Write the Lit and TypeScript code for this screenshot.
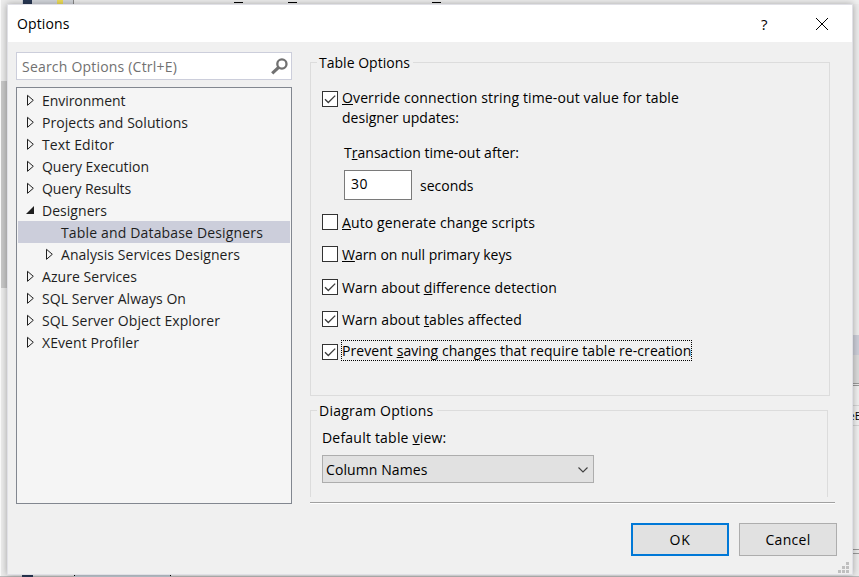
import { LitElement, html, css, svg, nothing } from "lit";
import { customElement, property, state } from "lit/decorators.js";

/** One line of text, tracked so that it fills a given measure. "&" marks the access key. */
@customElement("ui-text")
class UiText extends LitElement {
  @property() text = "";
  @property({ type: Number }) measure = 0;
  @state() private tracking = 0;

  static styles = css`
    :host { display: block; white-space: pre; }
    .run { display: inline-block; }
    .key { text-decoration: underline; text-decoration-thickness: 1px; text-underline-offset: 1px; text-decoration-skip-ink: none; }
  `;

  firstUpdated() {
    const run = this.renderRoot.querySelector(".run") as HTMLElement;
    const count = this.text.replace("&", "").length;
    if (this.measure && count > 1) {
      this.tracking = (this.measure - run.getBoundingClientRect().width) / count;
    }
  }

  render() {
    const at = this.text.indexOf("&");
    const body = at < 0
      ? this.text
      : html`${this.text.slice(0, at)}<span class="key">${this.text[at + 1]}</span>${this.text.slice(at + 2)}`;
    return html`<span class="run" style="letter-spacing:${this.tracking}px">${body}</span>`;
  }
}

@customElement("ui-check")
class UiCheck extends LitElement {
  @property({ type: Boolean }) checked = false;
  static styles = css`
    :host { display: block; flex: none; width: 16px; height: 16px; box-sizing: border-box; border: 1px solid #333; background: #fff; }
    svg { display: block; }
  `;
  render() {
    return this.checked
      ? html`<svg width="14" height="14" viewBox="0 0 14 14"><path d="M2 7.2 5.3 10.5 12.2 3.6" fill="none" stroke="#3c3c3c" stroke-width="1.3"/></svg>`
      : nothing;
  }
}

interface Node { label: string; w: number; kind: "closed" | "open" | "leaf"; child?: boolean; selected?: boolean; }

const NODES: Node[] = [
  { label: "Environment", w: 83.5, kind: "closed" },
  { label: "Projects and Solutions", w: 146, kind: "closed" },
  { label: "Text Editor", w: 72, kind: "closed" },
  { label: "Query Execution", w: 107, kind: "closed" },
  { label: "Query Results", w: 89, kind: "closed" },
  { label: "Designers", w: 65, kind: "open" },
  { label: "Table and Database Designers", w: 202, kind: "leaf", child: true, selected: true },
  { label: "Analysis Services Designers", w: 179, kind: "closed", child: true },
  { label: "Azure Services", w: 95, kind: "closed" },
  { label: "SQL Server Always On", w: 144, kind: "closed" },
  { label: "SQL Server Object Explorer", w: 178, kind: "closed" },
  { label: "XEvent Profiler", w: 97, kind: "closed" },
];

@customElement("app-root")
class AppRoot extends LitElement {
  static styles = css`
    :host { display: block; position: relative; width: 859px; height: 577px; overflow: hidden; background: #ececec; font: 14px/20px "Open Sans", "Noto Sans", sans-serif; color: #000; }
    * { box-sizing: border-box; }
    svg { display: block; flex: none; }
    .backdrop { display: block; }
    .dialog { position: absolute; left: 7px; top: 4px; width: 846px; height: 571px; border: 1px solid #e0e0e6; background: #f0f0f0; box-shadow: 0 0 7px rgba(0,0,0,.32); display: flex; flex-direction: column; }
    .title { height: 37px; flex: none; background: #fff; display: flex; align-items: center; padding: 0 23px 0 9px; }
    .title .grow { flex: 1; }
    .help { font-size: 15px; margin-right: 45px; width: 9px; }
    .body { display: flex; height: 463px; padding: 10px 17px 0 8px; gap: 18px; }
    .left { width: 276px; display: flex; flex-direction: column; gap: 7px; }
    .search { height: 28px; border: 1px solid #cccedb; background: #fff; display: flex; align-items: center; justify-content: space-between; padding: 1px 3px 0 5px; color: #717171; }
    .tree { height: 417px; border: 1px solid #828790; background: #f5f5f5; padding: 1px; color: #1e1e1e; }
    .node { height: 22px; display: flex; align-items: center; padding-left: 7px; gap: 6px; }
    .node ui-text { margin-top: 2px; }
    .child { padding-left: 26px; }
    .selected { background: #cccedb; }
    .right { width: 525px; display: flex; flex-direction: column; }
    .group { border: 1px solid #dcdcdc; }
    .legend { width: fit-content; background: #f0f0f0; padding: 0 3px 0 2px; margin: -10px 0 0 6px; }
    .table { width: 520px; height: 334px; margin-top: 10px; }
    .diagram { width: 518px; height: 87px; margin-top: 14px; border-bottom: 0; }
    .option { display: flex; align-items: flex-start; gap: 4px; padding-left: 11px; height: 20px; }
    .option ui-check { margin-top: 2px; }
    .first { height: 40px; margin-top: 15px; }
    .first ui-check { margin-top: 3px; }
    .timeout { padding: 15px 0 0 33px; }
    .line { display: flex; gap: 8px; margin-top: 7px; }
    .field { width: 68px; height: 30px; border: 1px solid #7a7a7a; background: #fff; padding: 3px 6px; }
    .unit { margin-top: 6px; }
    .options { display: flex; flex-direction: column; margin-top: 12px; }
    .options .option { height: 32px; }
    .options .option:nth-child(even) { height: 33px; }
    .options ui-text { margin-top: 1px; }
    .options .focus { outline: 1px dotted #000; height: 19px; width: 349px; line-height: 19px; margin-top: -1px; }
    .caption { margin: 7px 0 0 11px; }
    .select { width: 272px; height: 28px; margin: 7px 0 0 11px; border: 1px solid #adadad; background: #e1e1e1; display: flex; align-items: center; justify-content: space-between; padding: 1px 4px 0 3px; }
    .rule { height: 2px; margin-top: 5px; background: #a0a0a0; border-bottom: 1px solid #fff; }
    .actions { display: flex; justify-content: flex-end; gap: 10px; padding: 18px 15px 0 0; }
    .button { width: 98px; height: 33px; border: 1px solid #adadad; background: #e1e1e1; display: flex; align-items: center; justify-content: center; }
    .primary { border: 2px solid #0078d7; }
    .grip { position: absolute; right: 3px; bottom: 1px; }
    .peek { font-size: 11px; }
  `;

  private arrow(kind: Node["kind"]) {
    return html`<svg width="11" height="14" viewBox="0 0 11 14">
      ${kind === "closed" ? svg`<path d="M2.5 2.3V12.3L8.3 7.3Z" fill="none" stroke="#1e1e1e"/>`
        : kind === "open" ? svg`<path d="M9 3V11H1Z" fill="#1e1e1e"/>` : nothing}
    </svg>`;
  }

  private backdrop() {
    return html`<svg class="backdrop" width="859" height="577" viewBox="0 0 859 577" shape-rendering="crispEdges">
      <rect width="859" height="577" fill="#ececec"/>
      <rect width="1" height="577" fill="#fafafa"/>
      <rect x="1" y="81" width="7" height="207" fill="#c8c8c8"/>
      <rect x="22" width="51" height="5" fill="#d5d8de"/>
      <rect x="23" width="9" height="5" fill="#293955"/>
      <rect x="57" width="6" height="5" fill="#f1e05a"/>
      <rect x="73" width="1" height="5" fill="#8a8a8a"/>
      <rect x="80" width="779" height="4" fill="#f0f0f0"/>
      <path d="M234 2.5h9M288 2.5h9M432 2.5h9" stroke="#000"/>
      <rect x="852" y="335" width="7" height="20" fill="#ccced8"/>
      <rect x="852" y="355" width="7" height="28" fill="#dadada"/>
      <path d="M852 383.5h7M852 385.5h7M852 549.5h7M852 553.5h7" stroke="#999"/>
      <rect x="852" y="386" width="7" height="163" fill="#f0f0f0"/>
      <path d="M852 405.5h7M852 425.5h7" stroke="#d5d5d5"/>
      <text class="peek" x="848.5" y="420">eE</text>
      <path d="M0 576.5h859" stroke="#bbb"/>
      <rect x="22" y="575" width="11" height="2" fill="#293955"/>
      <rect x="74" y="575" width="96" height="2" fill="#c3ccd4"/>
      <path d="M74.5 575v1M170.5 575v1" stroke="#000"/>
    </svg>`;
  }

  private check(label: string, w: number, checked = false) {
    return html`<div class="option"><ui-check ?checked=${checked}></ui-check><ui-text text=${label} measure=${w}></ui-text></div>`;
  }

  render() {
    return html`
      ${this.backdrop()}
      <div class="dialog">
        <div class="title">
          <ui-text text="Options" measure="52.5"></ui-text>
          <span class="grow"></span>
          <span class="help">?</span>
          <svg width="14" height="14" viewBox="0 0 14 14"><path d="M1 1 13 13M13 1 1 13" stroke="#000" stroke-width="1"/></svg>
        </div>
        <div class="body">
          <div class="left">
            <div class="search">
              <ui-text text="Search Options (Ctrl+E)" measure="155"></ui-text>
              <svg width="17" height="17" viewBox="0 0 17 17" fill="none" stroke="#717171"><circle cx="10.9" cy="6" r="4.6" stroke-width="2.3"/><path d="M7.6 9.3 1.2 15.4" stroke-width="3.2"/></svg>
            </div>
            <div class="tree">
              ${NODES.map(n => html`<div class="node ${n.child ? "child" : ""} ${n.selected ? "selected" : ""}">
                ${this.arrow(n.kind)}<ui-text text=${n.label} measure=${n.w}></ui-text></div>`)}
            </div>
          </div>
          <div class="right">
            <div class="group table">
              <div class="legend"><ui-text text="Table Options" measure="91"></ui-text></div>
              <div class="option first">
                <ui-check checked></ui-check>
                <div>
                  <ui-text text="&Override connection string time-out value for table" measure="337"></ui-text>
                  <ui-text text="designer updates:" measure="117"></ui-text>
                </div>
              </div>
              <div class="timeout">
                <ui-text text="T&ransaction time-out after:" measure="175"></ui-text>
                <div class="line">
                  <div class="field"><ui-text text="30" measure="17"></ui-text></div>
                  <ui-text class="unit" text="seconds" measure="53.5"></ui-text>
                </div>
              </div>
              <div class="options">
                ${this.check("&Auto generate change scripts", 193)}
                ${this.check("&Warn on null primary keys", 170)}
                ${this.check("Warn about &difference detection", 215, true)}
                ${this.check("Warn about &tables affected", 180, true)}
                <div class="option"><ui-check checked></ui-check><ui-text class="focus" text="Prevent &saving changes that require table re-creation" measure="349.5"></ui-text></div>
              </div>
            </div>
            <div class="group diagram">
              <div class="legend"><ui-text text="Diagram Options" measure="114.5"></ui-text></div>
              <ui-text class="caption" text="Default table &view:" measure="124.5"></ui-text>
              <div class="select">
                <ui-text text="Column Names" measure="101.5"></ui-text>
                <svg width="12" height="8" viewBox="0 0 12 8"><path d="M1.5 1.5 6 6 10.5 1.5" fill="none" stroke="#404040" stroke-width="1.1"/></svg>
              </div>
            </div>
            <div class="rule"></div>
          </div>
        </div>
        <div class="actions">
          <div class="button primary"><ui-text text="OK" measure="21"></ui-text></div>
          <div class="button"><ui-text text="Cancel" measure="45"></ui-text></div>
        </div>
        <svg class="grip" width="11" height="11" viewBox="0 0 11 11" shape-rendering="crispEdges"><path d="M8 0h3v3H8zM4 4h3v3H4zM8 4h3v3H8zM0 8h3v3H0zM4 8h3v3H4zM8 8h3v3H8z" fill="#bfbfbf"/></svg>
      </div>`;
  }
}
